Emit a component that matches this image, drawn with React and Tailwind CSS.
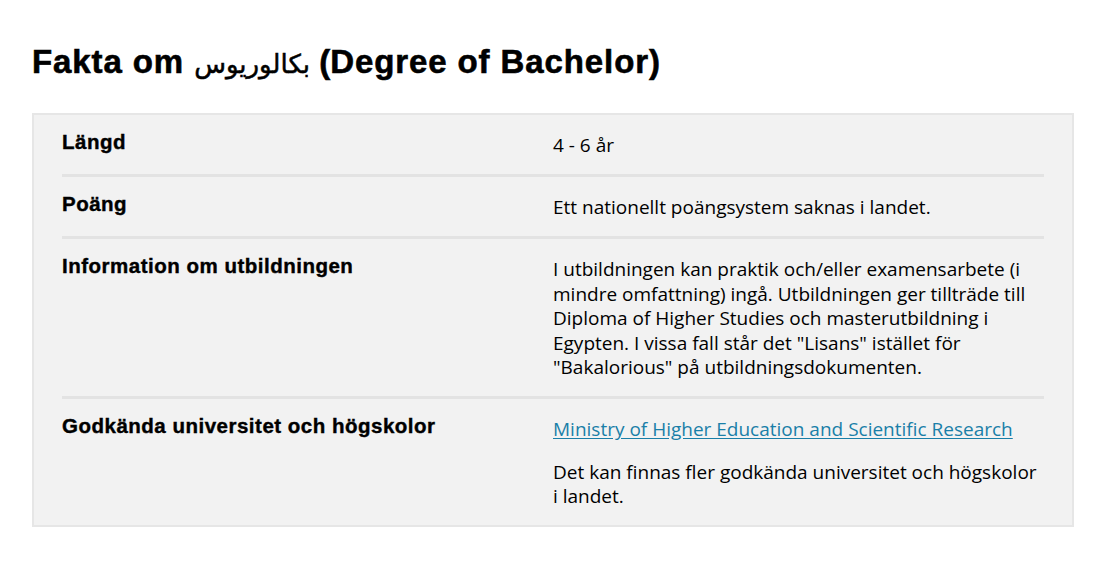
const rows = [
    { label: 'Längd', body: <p>4 - 6 år</p> },
    { label: 'Poäng', body: <p>Ett nationellt poängsystem saknas i landet.</p> },
    {
        label: 'Information om utbildningen',
        body: (
            <p>
                I utbildningen kan praktik och/eller examensarbete (i mindre omfattning) ingå. Utbildningen ger tillträde till
                Diploma of Higher Studies och masterutbildning i Egypten. I vissa fall står det "Lisans" istället för
                "Bakalorious" på utbildningsdokumenten.
            </p>
        ),
    },
    {
        label: 'Godkända universitet och högskolor',
        body: (
            <>
                <p>
                    <a href="#" className="text-[#1a7fa8] underline underline-offset-2">
                        Ministry of Higher Education and Scientific Research
                    </a>
                </p>
                <p className="mt-[18px]">Det kan finnas fler godkända universitet och högskolor i landet.</p>
            </>
        ),
    },
];

export default function App() {
    return (
        <div className="min-h-[573px] bg-white px-[32px] pt-[42px]" style={{ fontFamily: '"Liberation Sans", Arial, sans-serif' }}>
            <h1 className="text-[33px] font-bold leading-[40px] tracking-[0.9px] text-black [-webkit-text-stroke:0.6px_black]">
                Fakta om{' '}
                <span
                    className="text-[26px] font-normal tracking-normal [-webkit-text-stroke:0.5px_black]"
                    style={{ fontFamily: '"DejaVu Sans", sans-serif' }}
                >
                    بكالوريوس
                </span>{' '}
                (Degree of Bachelor)
            </h1>

            <div className="mt-[29px] w-[1042px] border-2 border-[#e6e6e6] bg-[#f2f2f2] px-[28px]">
                {rows.map((row, i) => (
                    <div
                        key={row.label}
                        className={`flex ${i < rows.length - 1 ? 'border-b-[3px] border-[#e3e3e3]' : ''} pt-[15px] pb-[16.5px]`}
                    >
                        <div className="w-[491px] shrink-0 text-[20.5px] font-bold leading-[24px] tracking-[0.5px] text-black [-webkit-text-stroke:0.4px_black]">
                            {row.label}
                        </div>
                        <div
                            className="mt-[3px] w-[491px] text-[19px] leading-[24.5px] text-black"
                            style={{ fontFamily: '"Open Sans", sans-serif' }}
                        >
                            {row.body}
                        </div>
                    </div>
                ))}
            </div>
        </div>
    );
}
